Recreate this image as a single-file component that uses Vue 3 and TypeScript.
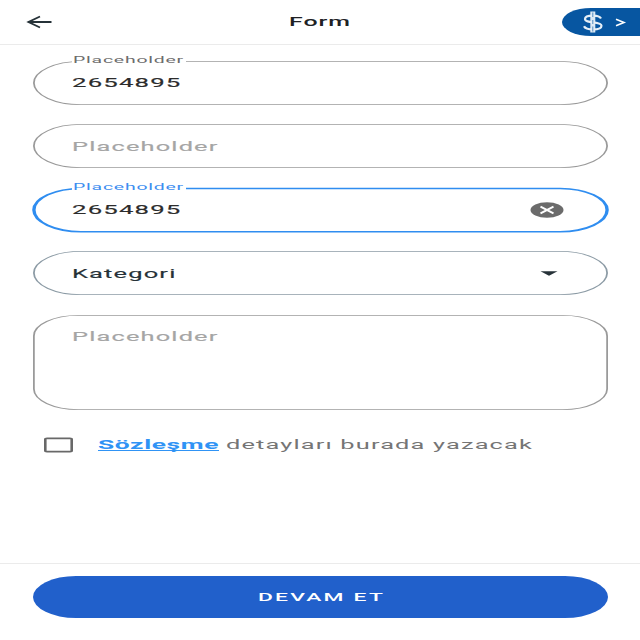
<script setup lang="ts">
interface Field {
  id: string
  kind: 'input' | 'select' | 'area'
  text: string
  width: number
  floating: boolean
  focused?: boolean
  muted?: boolean
}

const fields: Field[] = [
  { id: 'first', kind: 'input', text: '2654895', width: 109.5, floating: true },
  { id: 'second', kind: 'input', text: 'Placeholder', width: 146.5, floating: false, muted: true },
  { id: 'third', kind: 'input', text: '2654895', width: 109.5, floating: true, focused: true },
  { id: 'category', kind: 'select', text: 'Kategori', width: 104.5, floating: false },
  { id: 'notes', kind: 'area', text: 'Placeholder', width: 146.5, floating: false, muted: true },
]
</script>

<template>
  <main class="screen">
    <header class="bar">
      <svg class="back" width="28" height="16" viewBox="0 0 28 16">
        <path d="M26.500 8H3M15 2.500L3.500 8l11.500 5.500" />
      </svg>
      <svg class="title" width="64" height="20">
        <text x="1" y="15" textLength="62" lengthAdjust="spacingAndGlyphs">Form</text>
      </svg>
      <div class="wallet">
        <svg width="78" height="28" viewBox="0 0 78 28">
          <rect class="stem" x="28.300" y="3.500" width="5" height="21" />
          <path class="coin" d="M39 10.600C38 8.600 35 7.700 31 7.700c-4.500 0-8 1.200-8 3.300 0 4.600 16.500 2.300 16.500 6.700 0 2.300-3.800 3.700-8.500 3.700-4.500 0-8-1.100-9-3.200" />
          <path class="slot" d="M30.800 4.500v4.500M30.800 12v4M30.800 18.500v5" />
          <path class="chevron" d="M54 11.200l8 3.300-8 3.300" />
        </svg>
      </div>
    </header>

    <form class="form" @submit.prevent>
      <div
        v-for="field in fields"
        :key="field.id"
        class="field"
        :class="[field.kind, { focused: field.focused, muted: field.muted }]"
      >
        <svg
          class="outline"
          :viewBox="field.kind === 'area' ? '0 0 324 116' : '0 0 324 54'"
          preserveAspectRatio="none"
        >
          <rect
            x="0.5"
            y="0.5"
            width="323"
            :height="field.kind === 'area' ? 115 : 53"
            :rx="field.kind === 'area' ? 25 : 26.5"
          />
        </svg>
        <div v-if="field.floating" class="notch">
          <svg width="114" height="14">
            <text x="1" y="10.500" textLength="111" lengthAdjust="spacingAndGlyphs">Placeholder</text>
          </svg>
        </div>
        <svg class="value" width="160" height="20">
          <text x="0" y="15" :textLength="field.width" lengthAdjust="spacingAndGlyphs">{{ field.text }}</text>
        </svg>
        <svg v-if="field.focused" class="clear" width="34" height="16" viewBox="0 0 34 16">
          <ellipse cx="17" cy="8" rx="16.500" ry="7.800" />
          <path d="M10.500 4.700l13 6.600M23.500 4.700l-13 6.600" />
        </svg>
        <svg v-if="field.kind === 'select'" class="caret" width="18" height="5" viewBox="0 0 18 5">
          <path d="M0.500 0.300h17L9 4.700z" />
        </svg>
      </div>

      <label class="agreement">
        <svg class="box" width="31" height="16" viewBox="0 0 31 16">
          <path fill-rule="evenodd" d="M4 .5H27Q30 .5 30 2.200V13.800Q30 15.500 27 15.500H4Q1 15.500 1 13.800V2.200Q1 .5 4 .5ZM3.600 2.200V13.800H27.400V2.200Z" />
        </svg>
        <svg class="terms" width="440" height="22">
          <text class="link" x="0" y="15" textLength="121" lengthAdjust="spacingAndGlyphs">Sözleşme</text>
          <path class="underline" d="M0 16.500h121" />
          <text x="128" y="15" textLength="307" lengthAdjust="spacingAndGlyphs">detayları burada yazacak</text>
        </svg>
      </label>
    </form>

    <footer class="footer">
      <button class="submit" type="button">
        <svg width="128" height="18">
          <text x="2" y="13.200" textLength="127" lengthAdjust="spacingAndGlyphs">DEVAM ET</text>
        </svg>
      </button>
    </footer>
  </main>
</template>

<style>
body {
  margin: 0;
  background: #fff;
}
</style>

<style scoped>
.screen {
  box-sizing: border-box;
  width: 640px;
  height: 640px;
  display: flex;
  flex-direction: column;
  background: #fff;
  font-family: Roboto, "Liberation Sans", sans-serif;
  overflow: hidden;
}
svg {
  display: block;
  flex: none;
}
.bar {
  box-sizing: border-box;
  height: 45px;
  flex: none;
  display: grid;
  grid-template-columns: 1fr 64px 1fr;
  align-items: center;
  border-bottom: 1px solid #ebebeb;
}
.back {
  margin-left: 25px;
}
.back path {
  fill: none;
  stroke: #263238;
  stroke-width: 1.9;
}
.title {
  margin-top: -2px;
}
.title text {
  font-size: 13px;
  font-weight: 500;
  letter-spacing: 0.5px;
  fill: #202124;
}
.wallet {
  justify-self: end;
  width: 78px;
  height: 28px;
  background: #0756a1;
  border-radius: 29px 0 0 29px / 14px 0 0 14px;
}
.stem {
  fill: #dce9f4;
}
.coin {
  fill: none;
  stroke: #e6eff7;
  stroke-width: 2.2;
}
.slot {
  fill: none;
  stroke: #4f8bc0;
  stroke-width: 1;
}
.chevron {
  fill: none;
  stroke: #fff;
  stroke-width: 1.6;
}
.form {
  flex: 1;
  display: flex;
  flex-direction: column;
  gap: 19.500px;
  padding: 15.500px 32px 0;
}
.field {
  position: relative;
  box-sizing: border-box;
  height: 44.100px;
  flex: none;
  display: flex;
  align-items: center;
  padding: 0 44px 0 40px;
}
.field.area {
  height: 95px;
  align-items: flex-start;
  padding-top: 11px;
}
.outline {
  position: absolute;
  inset: 0 0.500px;
  width: 575px;
  height: 100%;
  overflow: visible;
}
.outline rect {
  fill: none;
  stroke: #9a9a9a;
  stroke-width: 1;
}
.select .outline rect {
  stroke: #8c9ba5;
}
.focused .outline rect {
  stroke: #2f8df0;
  stroke-width: 1.9;
}
.notch {
  position: absolute;
  left: 40px;
  top: -9px;
  background: #fff;
}
.notch text {
  font-size: 9.800px;
  letter-spacing: 0.4px;
  fill: #6c6c6c;
}
.focused .notch text {
  fill: #3c8df0;
}
.value {
  margin-top: -1px;
}
.value text {
  font-size: 13.200px;
  letter-spacing: 0.6px;
  fill: #2c2c2c;
  stroke: #2c2c2c;
  stroke-width: 0.15px;
}
.select .value text {
  fill: #263238;
  stroke: #263238;
}
.muted .value {
  margin-top: 0;
}
.muted .value text {
  fill: #a5a5a5;
  stroke: #a5a5a5;
}
.clear {
  margin-left: auto;
}
.clear ellipse {
  fill: #6b6b6b;
}
.clear path {
  stroke: #fff;
  stroke-width: 2;
}
.caret {
  margin-left: auto;
  margin-right: 6px;
}
.caret path {
  fill: #263238;
}
.agreement {
  display: flex;
  align-items: center;
  gap: 24px;
  padding-left: 11px;
  margin-top: 5px;
}
.box path {
  fill: #686868;
}
.terms text {
  font-size: 13.200px;
  letter-spacing: 0.6px;
  fill: #757575;
}
.terms .link {
  font-weight: 700;
  letter-spacing: 0.3px;
  fill: #2f93f5;
}
.underline {
  stroke: #2f93f5;
  stroke-width: 1;
}
.footer {
  box-sizing: border-box;
  height: 77px;
  flex: none;
  padding: 12px 32.500px 0;
  border-top: 1px solid #ebebeb;
}
.submit {
  width: 575px;
  height: 42px;
  display: flex;
  align-items: center;
  justify-content: center;
  padding: 0;
  border: 0;
  border-radius: 43px / 21px;
  background: #2160cb;
  font-family: inherit;
}
.submit text {
  font-size: 11.500px;
  font-weight: 500;
  letter-spacing: 1.1px;
  fill: #fff;
}
</style>
